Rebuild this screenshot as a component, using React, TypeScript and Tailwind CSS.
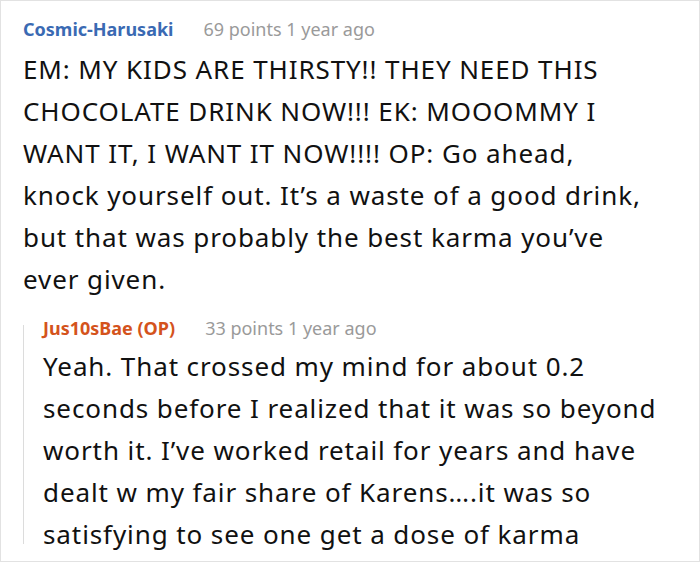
import React from "react";

type CommentProps = {
  author: string;
  authorClass: string;
  points: number;
  age: string;
  body: string;
  bodyGap: string;
};

function Comment({ author, authorClass, points, age, body, bodyGap }: CommentProps) {
  return (
    <div>
      <div className="flex items-baseline gap-[30px] text-[18px] leading-[26px]">
        <span className={`font-bold ${authorClass}`}>{author}</span>
        <span className="text-[#9a9a9a]">
          {points} points {age}
        </span>
      </div>
      <p className={`${bodyGap} text-[26px] leading-[42px] tracking-[0.9px] text-[#111]`}>{body}</p>
    </div>
  );
}

export default function App() {
  return (
    <div
      className="w-[700px] h-[562px] overflow-hidden bg-white border border-[#e2e2e2] pl-[22px] pr-[42px] pt-[15px]"
      style={{ fontFamily: '"Noto Sans", "Open Sans", sans-serif' }}
    >
      <Comment
        author="Cosmic-Harusaki"
        authorClass="text-[#3a6ab3]"
        points={69}
        age="1 year ago"
        bodyGap="mt-[6px]"
        body="EM: MY KIDS ARE THIRSTY!! THEY NEED THIS CHOCOLATE DRINK NOW!!! EK: MOOOMMY I WANT IT, I WANT IT NOW!!!! OP: Go ahead, knock yourself out. It’s a waste of a good drink, but that was probably the best karma you’ve ever given."
      />
      <div className="mt-[15px] flex">
        <div className="w-px shrink-0 bg-[#dcdcdc] mt-[10px] mb-[11px]" />
        <div className="pl-[19px]">
          <Comment
            author="Jus10sBae (OP)"
            authorClass="text-[#d4531c]"
            points={33}
            age="1 year ago"
            bodyGap="mt-[4px]"
            body="Yeah. That crossed my mind for about 0.2 seconds before I realized that it was so beyond worth it. I’ve worked retail for years and have dealt w my fair share of Karens….it was so satisfying to see one get a dose of karma"
          />
        </div>
      </div>
    </div>
  );
}
